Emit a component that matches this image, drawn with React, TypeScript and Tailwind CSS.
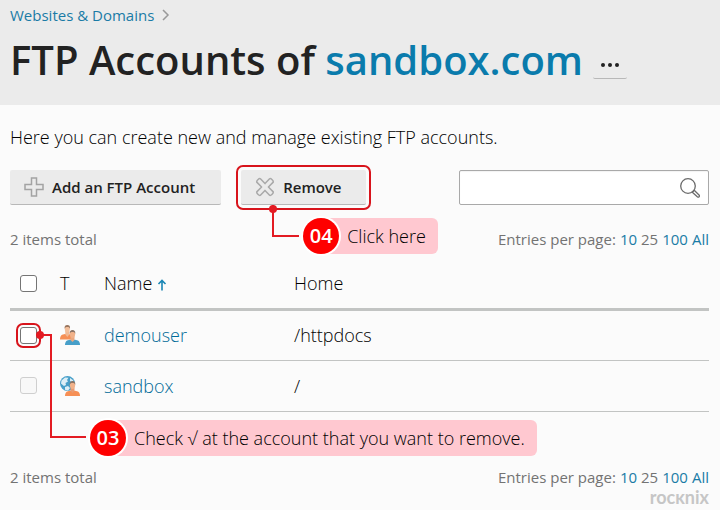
import type { ReactNode } from "react";

const accounts = [
  { name: "demouser", home: "/httpdocs", type: "extra" },
  { name: "sandbox", home: "/", type: "main" },
];

function PlusIcon() {
  return (
    <svg className="size-5" viewBox="0 0 20 20" fill="none" stroke="#a3a3a3" strokeWidth="1.5" aria-hidden="true">
      <path d="M7.5 1h5v6.5H19v5h-6.5V19h-5v-6.5H1v-5h6.5z" />
    </svg>
  );
}

function CrossIcon() {
  return (
    <svg className="size-5" viewBox="0 0 20 20" fill="none" stroke="#a9a9a9" strokeWidth="1.5" strokeLinejoin="round" aria-hidden="true">
      <path d="M5.400 1.800 10 6.600l4.600-4.800c1-1 4.600 2.200 3.400 3.600L13.400 10l4.600 4.600c1.200 1.400-2.400 4.600-3.400 3.600L10 13.400l-4.600 4.800c-1 1-4.600-2.200-3.400-3.600L6.600 10 2 5.400C.8 4 4.400.8 5.400 1.800z" />
    </svg>
  );
}

function SearchIcon() {
  return (
    <svg className="size-5" viewBox="0 0 20 20" fill="none" stroke="#6b6b6b" strokeWidth="1.3" aria-hidden="true">
      <circle cx="8" cy="8" r="7.300" />
      <path d="m12.300 14.200 1.900-1.900 4.800 4.700c.6.6.5 1.300.1 1.700-.5.5-1.200.5-1.800 0z" strokeLinejoin="round" />
    </svg>
  );
}

function UsersIcon() {
  return (
    <svg className="size-5" viewBox="0 0 20 20" aria-hidden="true">
      <path d="M0 14.5c0-4 2-5.200 5-5.500h4c2 .2 3 1.500 3 5.500z" fill="#f68f55" />
      <path d="M5.300 6h4v3.500L7.300 12l-2-2.500z" fill="#f0b893" />
      <ellipse cx="7.300" cy="4" rx="2.500" ry="3.500" fill="#f3bf9b" />
      <path d="M4.600 3.800C4.300 1 5.500 0 7.300 0s3.100 1 2.700 3.800C9.500 2.300 8.500 2 7.300 2s-2.200.3-2.700 1.800z" fill="#98765f" />
      <path d="M5 20c0-3.500 2-5 5-5.200h5c3 .2 5 1.700 5 5.200z" fill="#479fc9" />
      <path d="M10.500 11.500h4V15l-2 2-2-2z" fill="#eba87f" />
      <ellipse cx="12.500" cy="9.200" rx="2.600" ry="3.700" fill="#f1b28a" />
      <path d="M9.700 9c-.3-3 1-4 2.800-4s3.100 1 2.800 4c-.5-1.700-1.500-2-2.800-2s-2.300.3-2.800 2z" fill="#8c7466" />
    </svg>
  );
}

function GlobeUserIcon() {
  return (
    <svg className="size-5" viewBox="0 0 20 20" aria-hidden="true">
      <circle cx="7.500" cy="7.500" r="7.500" fill="#479fc9" />
      <path d="M1.500 4.500 5 1.500l3.500.2L7 4l1 1.500L5.500 7 6 9 4 10 1 7.500zM10 2l3.500 2.500L12 6l-2-1zM5 11l3-1 2 2-2 2.700-3-1z" fill="#dceef6" />
      <path d="M5 20c0-3.500 2-5 5-5.200h5c3 .2 5 1.700 5 5.200z" fill="#f68f55" />
      <path d="M10.500 11.500h4V15l-2 2-2-2z" fill="#e99b72" />
      <ellipse cx="12.500" cy="9.200" rx="2.600" ry="3.700" fill="#f1b28a" />
      <path d="M9.700 9c-.3-3 1-4 2.800-4s3.100 1 2.800 4c-.5-1.700-1.500-2-2.800-2s-2.300.3-2.800 2z" fill="#8c7466" />
    </svg>
  );
}

function Callout({ step, children }: { step: string; children: ReactNode }) {
  return (
    <div className="flex items-center whitespace-nowrap">
      <span className="z-10 flex size-9 items-center justify-center rounded-full bg-[#fe0000] text-xl font-semibold text-white ring-2 ring-white">
        {step}
      </span>
      <span className="-ml-4 flex h-9 items-center rounded-md bg-[#ffc8d0] pr-3 pl-6 text-lg font-light text-black">
        {children}
      </span>
    </div>
  );
}

function ListSummary() {
  return (
    <div className="flex items-center justify-between text-[15px] leading-5 text-[#737373]">
      <span>2 items total</span>
      <div className="flex gap-1">
        <span>Entries per page:</span>
        <a href="#10" className="text-[#1a7ba6]">10</a>
        <span>25</span>
        <a href="#100" className="text-[#1a7ba6]">100</a>
        <a href="#all" className="text-[#1a7ba6]">All</a>
      </div>
    </div>
  );
}

export default function App() {
  return (
    <div className="min-h-screen overflow-hidden bg-[#fbfbfb] font-['Open_Sans',sans-serif] text-[#222]">
      <header className="bg-[#ebebeb] px-[10px] pt-[5px] pb-4">
        <nav aria-label="Breadcrumb" className="flex items-center gap-2 text-[15px] leading-5">
          <a href="#domains" className="text-[#1a7ba6]">Websites &amp; Domains</a>
          <svg className="h-3 w-2" viewBox="0 0 8 12" fill="none" stroke="#999" strokeWidth="1.5" aria-hidden="true">
            <path d="m1 1 5 5-5 5" />
          </svg>
        </nav>
        <div className="mt-1 flex items-center gap-[10px]">
          <h1 className="pt-px text-[40px] leading-[59px] font-semibold whitespace-nowrap">
            FTP Accounts of <a href="#sandbox" className="text-[#0a7bac]">sandbox.com</a>
          </h1>
          <button type="button" aria-label="More actions" className="mt-3 flex h-7 w-[34px] items-center justify-center rounded-xs border-b border-[#b8b8b8]">
            <svg className="h-1 w-[18px]" viewBox="0 0 18 4" fill="#222" aria-hidden="true">
              <circle cx="2" cy="2" r="2" />
              <circle cx="9" cy="2" r="2" />
              <circle cx="16" cy="2" r="2" />
            </svg>
          </button>
        </div>
      </header>

      <main className="pt-5 pr-[11px] pl-[10px]">
        <p className="text-lg leading-6 font-light text-black">Here you can create new and manage existing FTP accounts.</p>

        <div className="mt-[21px] flex items-start gap-5">
          <button type="button" className="flex h-[35px] items-center gap-2 rounded-xs border-b border-[#b8b8b8] bg-[#ebebeb] pr-[26px] pl-[14px] text-[15px] font-semibold">
            <PlusIcon />
            Add an FTP Account
          </button>
          <div className="relative">
            <button type="button" className="flex h-[35px] items-center gap-2 rounded-xs border-b border-[#b8b8b8] bg-[#ebebeb] pr-6 pl-[14px] text-[15px] font-semibold outline-2 outline-offset-3 outline-[#d8141c]">
              <CrossIcon />
              Remove
            </button>
            <div className="absolute top-[35px] left-7 z-10 flex">
              <span className="absolute size-2 rounded-full bg-[#e31b23]" />
              <span className="ml-[3px] h-8 w-[27px] border-b-2 border-l-2 border-[#e31b23]" />
              <div className="mt-[13px] ml-1">
                <Callout step="04">Click here</Callout>
              </div>
            </div>
          </div>
          <label className="ml-auto flex h-[35px] w-[250px] items-center rounded-xs border border-[#a9a9a9] bg-white px-2 inset-shadow-xs">
            <input type="text" aria-label="Search accounts" className="min-w-0 flex-1 text-[15px] outline-none" />
            <SearchIcon />
          </label>
        </div>

        <div className="mt-6">
          <ListSummary />
        </div>

        <table className="mt-3 w-full table-fixed border-collapse text-left text-lg leading-6 font-light">
          <thead>
            <tr className="h-12 border-b-3 border-[#c2c4c3] text-black">
              <th className="w-[50px] pb-[2px] pl-[10px]">
                <input type="checkbox" aria-label="Select all accounts" className="block size-[17px] appearance-none rounded-[3px] border border-[#757575] bg-white" />
              </th>
              <th className="w-11 pb-[2px] font-light">T</th>
              <th className="w-[190px] pb-[2px] font-light">
                <span className="flex items-center gap-1">
                  Name
                  <svg className="mt-1 h-3 w-3" viewBox="0 0 12 12" fill="none" stroke="#1a86b5" strokeWidth="1.6" aria-hidden="true">
                    <path d="M6 11.500V1.500M2.500 5 6 1.500 9.500 5" />
                  </svg>
                </span>
              </th>
              <th className="pb-[2px] font-light">Home</th>
            </tr>
          </thead>
          <tbody>
            {accounts.map((account) => (
              <tr key={account.name} className="h-[51px] border-b border-[#c2c4c3] text-black">
                <td className="pl-[10px]">
                  {account.type === "extra" ? (
                    <div className="relative">
                      <input type="checkbox" aria-label={`Select ${account.name}`} className="block size-[17px] appearance-none rounded-[3px] border border-[#757575] bg-white outline-2 outline-offset-2 outline-[#d8141c]" />
                      <div className="absolute top-1 left-4 z-10 flex items-end">
                        <span className="absolute top-0 left-0 size-2 rounded-full bg-[#e31b23]" />
                        <span className="mt-[3px] h-[104px] w-4 border-t-2 border-r-2 border-[#e31b23]" />
                        <span className="w-[34px] border-b-2 border-[#e31b23]" />
                        <div className="-mb-[18px] ml-1">
                          <Callout step="03">Check √ at the account that you want to remove.</Callout>
                        </div>
                      </div>
                    </div>
                  ) : (
                    <input type="checkbox" disabled aria-label={`Select ${account.name}`} className="block size-[17px] appearance-none rounded-[3px] border border-[#cfcfcf] bg-[#f8f8f8]" />
                  )}
                </td>
                <td>{account.type === "extra" ? <UsersIcon /> : <GlobeUserIcon />}</td>
                <td>
                  <a href={`#${account.name}`} className="text-[#006a98]">{account.name}</a>
                </td>
                <td>{account.home}</td>
              </tr>
            ))}
          </tbody>
        </table>

        <div className="mt-[55px]">
          <ListSummary />
        </div>
        <p className="text-right text-lg leading-5 font-bold text-[#c6c6c6] font-['Lato',sans-serif]">rocĸnix</p>
      </main>
    </div>
  );
}
